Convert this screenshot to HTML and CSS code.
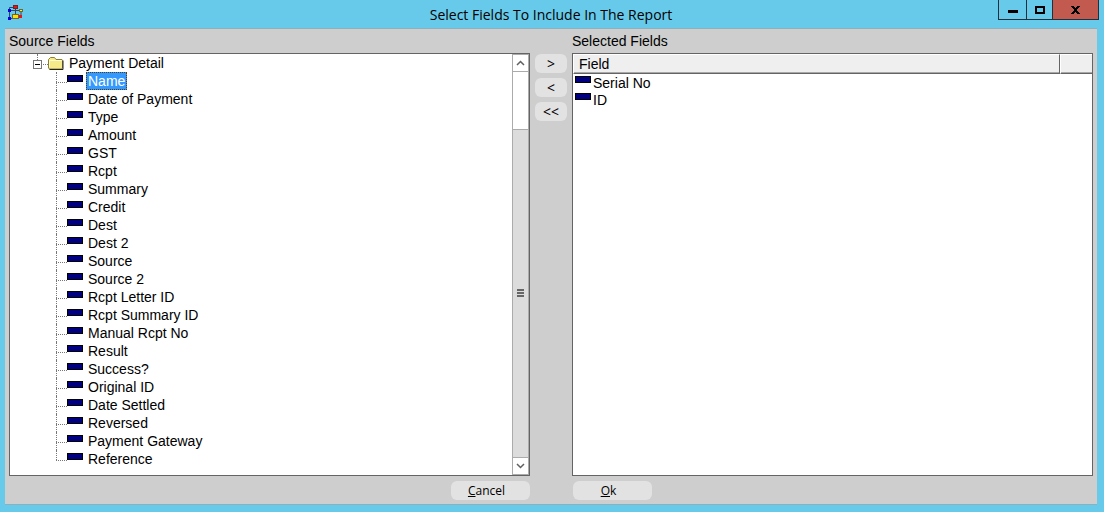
FILE: index.html
```html
<!DOCTYPE html>
<html lang="en">
<head>
  <meta charset="UTF-8">
  <meta name="viewport" content="width=device-width, initial-scale=1.0">
  <title>Select Fields To Include In The Report</title>
  <link rel="stylesheet" href="styles.css">
</head>
<body>
  <div class="window">
    <header class="title-bar">
      <svg class="app-icon" width="18" height="18" viewBox="0 0 18 18">
        <path d="M3.500 15V3.500H8M9.500 4v10M4 6.500h11M15 7v6M4 14.500h3" fill="none" stroke="#2a4a66"/>
        <rect x="7.500" y="1.500" width="4" height="3" fill="#f01010" stroke="#7a2020"/>
        <rect x="2" y="5" width="3" height="3" fill="#0000e0"/>
        <rect x="2" y="13" width="3" height="3" fill="#0000e0"/>
        <rect x="13.500" y="5.500" width="3" height="2" fill="#ffee20" stroke="#6a6a30"/>
        <rect x="6.500" y="10.500" width="6" height="4" fill="#ffe000" stroke="#6a6a30"/>
        <rect x="13" y="11" width="3" height="3" fill="#f01010"/>
      </svg>
      <h1>Select Fields To Include In The Report</h1>
      <div class="window-controls">
        <button type="button" class="minimize" aria-label="Minimize">
          <svg width="10" height="9" viewBox="0 0 10 9"><rect y="5" width="10" height="3"/></svg>
        </button>
        <button type="button" class="maximize" aria-label="Maximize">
          <svg width="10" height="8" viewBox="0 0 10 8"><path d="M0 0h10v8H0zM2 2v4h6V2z" fill-rule="evenodd"/></svg>
        </button>
        <button type="button" class="close" aria-label="Close">
          <svg width="9" height="8" viewBox="0 0 9 8" shape-rendering="crispEdges"><path d="M0 0h3v1h1v1h1V1h1V0h3v1H8v1H7v1H6v2h1v1h1v1h1v1H6V7H5V6H4v1H3v1H0V7h1V6h1V5h1V3H2V2H1V1H0z"/></svg>
        </button>
      </div>
    </header>

    <main class="dialog">
      <div class="columns">
        <!-- Source fields -->
        <section class="panel">
          <h2>Source Fields</h2>
          <div class="box source-box">
            <div class="tree">
              <div class="tree-root">
                <button type="button" class="toggle" aria-label="Collapse"></button>
                <svg class="folder" width="16" height="14" viewBox="0 0 16 14">
                  <path d="M.5 12V3.500l2-2h4l1.500 2h6l.5 1V12l-1 1h-12z" fill="#f6e98a" stroke="#8a8030"/>
                  <path d="M1.500 11V4.500h12" fill="none" stroke="#fffbd0"/>
                  <path d="M1.500 13.500h13.500V4.500" fill="none" stroke="#222"/>
                </svg>
                <span>Payment Detail</span>
              </div>
              <ul class="tree-items">
                <li class="selected"><i class="field-icon"></i><span>Name</span></li>
                <li><i class="field-icon"></i><span>Date of Payment</span></li>
                <li><i class="field-icon"></i><span>Type</span></li>
                <li><i class="field-icon"></i><span>Amount</span></li>
                <li><i class="field-icon"></i><span>GST</span></li>
                <li><i class="field-icon"></i><span>Rcpt</span></li>
                <li><i class="field-icon"></i><span>Summary</span></li>
                <li><i class="field-icon"></i><span>Credit</span></li>
                <li><i class="field-icon"></i><span>Dest</span></li>
                <li><i class="field-icon"></i><span>Dest 2</span></li>
                <li><i class="field-icon"></i><span>Source</span></li>
                <li><i class="field-icon"></i><span>Source 2</span></li>
                <li><i class="field-icon"></i><span>Rcpt Letter ID</span></li>
                <li><i class="field-icon"></i><span>Rcpt Summary ID</span></li>
                <li><i class="field-icon"></i><span>Manual Rcpt No</span></li>
                <li><i class="field-icon"></i><span>Result</span></li>
                <li><i class="field-icon"></i><span>Success?</span></li>
                <li><i class="field-icon"></i><span>Original ID</span></li>
                <li><i class="field-icon"></i><span>Date Settled</span></li>
                <li><i class="field-icon"></i><span>Reversed</span></li>
                <li><i class="field-icon"></i><span>Payment Gateway</span></li>
                <li><i class="field-icon"></i><span>Reference</span></li>
              </ul>
            </div>
            <div class="scrollbar">
              <button type="button" class="scroll-button" aria-label="Scroll up">
                <svg width="9" height="6" viewBox="0 0 9 6"><path d="M1 5l3.500-3.500L8 5" fill="none" stroke="#606060" stroke-width="1.500"/></svg>
              </button>
              <div class="scroll-track"></div>
              <div class="scroll-thumb">
                <svg width="7" height="8" viewBox="0 0 7 8"><path d="M0 0h7v2H0zM0 3h7v2H0zM0 6h7v2H0z" fill="#666"/></svg>
              </div>
              <button type="button" class="scroll-button" aria-label="Scroll down">
                <svg width="9" height="6" viewBox="0 0 9 6"><path d="M1 1l3.500 3.500L8 1" fill="none" stroke="#606060" stroke-width="1.500"/></svg>
              </button>
            </div>
          </div>
        </section>

        <!-- Move buttons -->
        <div class="move-buttons">
          <button type="button" class="button">&gt;</button>
          <button type="button" class="button">&lt;</button>
          <button type="button" class="button">&lt;&lt;</button>
        </div>

        <!-- Selected fields -->
        <section class="panel">
          <h2>Selected Fields</h2>
          <div class="box">
            <table class="field-table">
              <thead>
                <tr><th>Field</th><th class="spacer"></th></tr>
              </thead>
              <tbody>
                <tr><td colspan="2"><div class="field"><i class="field-icon"></i><span>Serial No</span></div></td></tr>
                <tr><td colspan="2"><div class="field"><i class="field-icon"></i><span>ID</span></div></td></tr>
              </tbody>
            </table>
          </div>
        </section>
      </div>

      <footer class="actions">
        <button type="button" class="button cancel"><u>C</u>ancel</button>
        <button type="button" class="button ok"><u>O</u>k</button>
      </footer>
    </main>
  </div>
</body>
</html>
```
FILE: styles.css
```css
:root {
  --frame-color: #67caea;
  --dialog-color: #cecece;
  --button-color: #e2e2e2;
  --border-color: #646464;
  --field-color: #000080;
}

* {
  margin: 0;
  padding: 0;
  box-sizing: border-box;
}

body {
  font-family: "Liberation Sans", Arial, sans-serif;
  font-size: 14px;
  color: #000;
  background-color: var(--frame-color);
}

button {
  border: none;
  font: inherit;
  color: inherit;
}

svg {
  display: block;
}

.window {
  display: flex;
  flex-direction: column;
  min-height: 100vh;
  padding: 0 7px 7px 5px;
  border-bottom: 1px solid #24414c;
}

/* Title bar */
.title-bar {
  position: relative;
  display: flex;
  align-items: center;
  justify-content: center;
  height: 28px;
}

.title-bar h1 {
  font-family: "Open Sans", "Noto Sans", sans-serif;
  font-size: 14px;
  font-weight: normal;
}

.app-icon {
  position: absolute;
  left: 1px;
  top: 4px;
}

.window-controls {
  position: absolute;
  top: 0;
  right: -2px;
  display: flex;
  height: 20px;
  border: 1px solid #21303a;
  border-top: none;
}

.window-controls button {
  display: flex;
  align-items: center;
  justify-content: center;
  width: 26px;
  background-color: var(--frame-color);
  border-right: 1px solid #21303a;
}

.window-controls .minimize {
  width: 28px;
}

.window-controls .close {
  width: 45px;
  background-color: #c35a50;
  border-right: none;
}

/* Dialog */
.dialog {
  flex: 1;
  display: flex;
  flex-direction: column;
  padding: 0 4px 4px;
  background-color: var(--dialog-color);
  border-top: 1px solid #8db0bd;
  border-bottom: 1px solid #8db0bd;
}

.columns {
  flex: 1;
  display: grid;
  grid-template-columns: 1fr 42px 1fr;
}

.panel {
  display: flex;
  flex-direction: column;
}

.panel h2 {
  height: 24px;
  font-size: 14px;
  font-weight: normal;
  line-height: 24px;
}

.box {
  flex: 1;
  background-color: #fff;
  border: 1px solid var(--border-color);
}

.source-box {
  display: flex;
}

/* Tree */
.tree {
  flex: 1;
  padding-bottom: 7px;
  line-height: 18px;
}

.tree-root {
  position: relative;
  display: flex;
  align-items: center;
  height: 18px;
  padding-left: 23px;
}

.tree-root::before {
  content: "";
  position: absolute;
  left: 27px;
  top: 0;
  height: 6px;
  border-left: 1px dotted #777;
}

.tree-root::after {
  content: "";
  position: absolute;
  left: 33px;
  top: 10px;
  width: 5px;
  border-top: 1px dotted #777;
}

.toggle {
  position: relative;
  width: 9px;
  height: 9px;
  margin-top: 2px;
  background-color: #fff;
  border: 1px solid #777;
}

.toggle::after {
  content: "";
  position: absolute;
  left: 1px;
  top: 3px;
  width: 5px;
  height: 1px;
  background-color: #000;
}

.folder {
  margin: 0 5px 0 6px;
}

.tree-items {
  list-style: none;
  padding-left: 46px;
}

.tree-items li {
  position: relative;
  display: flex;
  height: 18px;
  padding-left: 11px;
}

.tree-items li::before {
  content: "";
  position: absolute;
  left: 0;
  top: 0;
  height: 18px;
  border-left: 1px dotted #777;
}

.tree-items li:last-child::before {
  height: 10px;
}

.tree-items li::after {
  content: "";
  position: absolute;
  left: 0;
  top: 10px;
  width: 11px;
  border-top: 1px dotted #777;
}

.tree-items span {
  padding: 0 2px;
  margin-left: 3px;
}

.tree-items .selected span {
  color: #fff;
  background-color: #3399ff;
  outline: 1px dotted #5a3a10;
  outline-offset: -1px;
}

.field-icon {
  flex: none;
  width: 16px;
  height: 7px;
  margin-top: 3px;
  background-color: var(--field-color);
  border: 1px solid #000;
}

/* Scrollbar */
.scrollbar {
  display: flex;
  flex-direction: column;
  width: 17px;
  border: 1px solid #ababab;
}

.scroll-button {
  display: flex;
  align-items: center;
  justify-content: center;
  height: 16px;
  background-color: #fff;
}

.scroll-track {
  flex: 57;
  border-top: 1px solid #ababab;
}

.scroll-thumb {
  flex: 330;
  display: flex;
  align-items: center;
  justify-content: center;
  background-color: #dcdcdc;
  border-top: 1px solid #ababab;
  border-bottom: 1px solid #ababab;
}

/* Buttons */
.button {
  height: 19px;
  font-family: "Open Sans", "Noto Sans", sans-serif;
  font-size: 12px;
  line-height: 19px;
  background-color: var(--button-color);
  border-radius: 6px;
}

.move-buttons {
  display: flex;
  flex-direction: column;
  gap: 5px;
  padding: 25px 5px 0;
}

.move-buttons .button {
  font-size: 14px;
}

/* Selected fields table */
.field-table {
  width: 100%;
  border-collapse: separate;
  border-spacing: 0;
}

.field-table th {
  height: 20px;
  padding-left: 5px;
  font-weight: normal;
  text-align: left;
  line-height: 17px;
  background-color: #efefef;
  border-top: 1px solid #fff;
  border-left: 1px solid #fff;
  border-right: 1px solid var(--border-color);
  border-bottom: 1px solid var(--border-color);
  box-shadow: inset 0 -1px #a8a8a8;
}

.field-table .spacer {
  width: 32px;
  border-right: none;
}

.field {
  display: flex;
  height: 17px;
  padding-left: 2px;
  line-height: 19px;
}

.field .field-icon {
  margin-top: 2px;
}

.field span {
  margin-left: 2px;
}

/* Footer */
.actions {
  display: grid;
  grid-template-columns: 1fr 1fr;
  gap: 43px;
  padding-top: 5px;
}

.actions .button {
  width: 79px;
  padding-right: 7px;
}

.actions .cancel {
  justify-self: end;
}
```
